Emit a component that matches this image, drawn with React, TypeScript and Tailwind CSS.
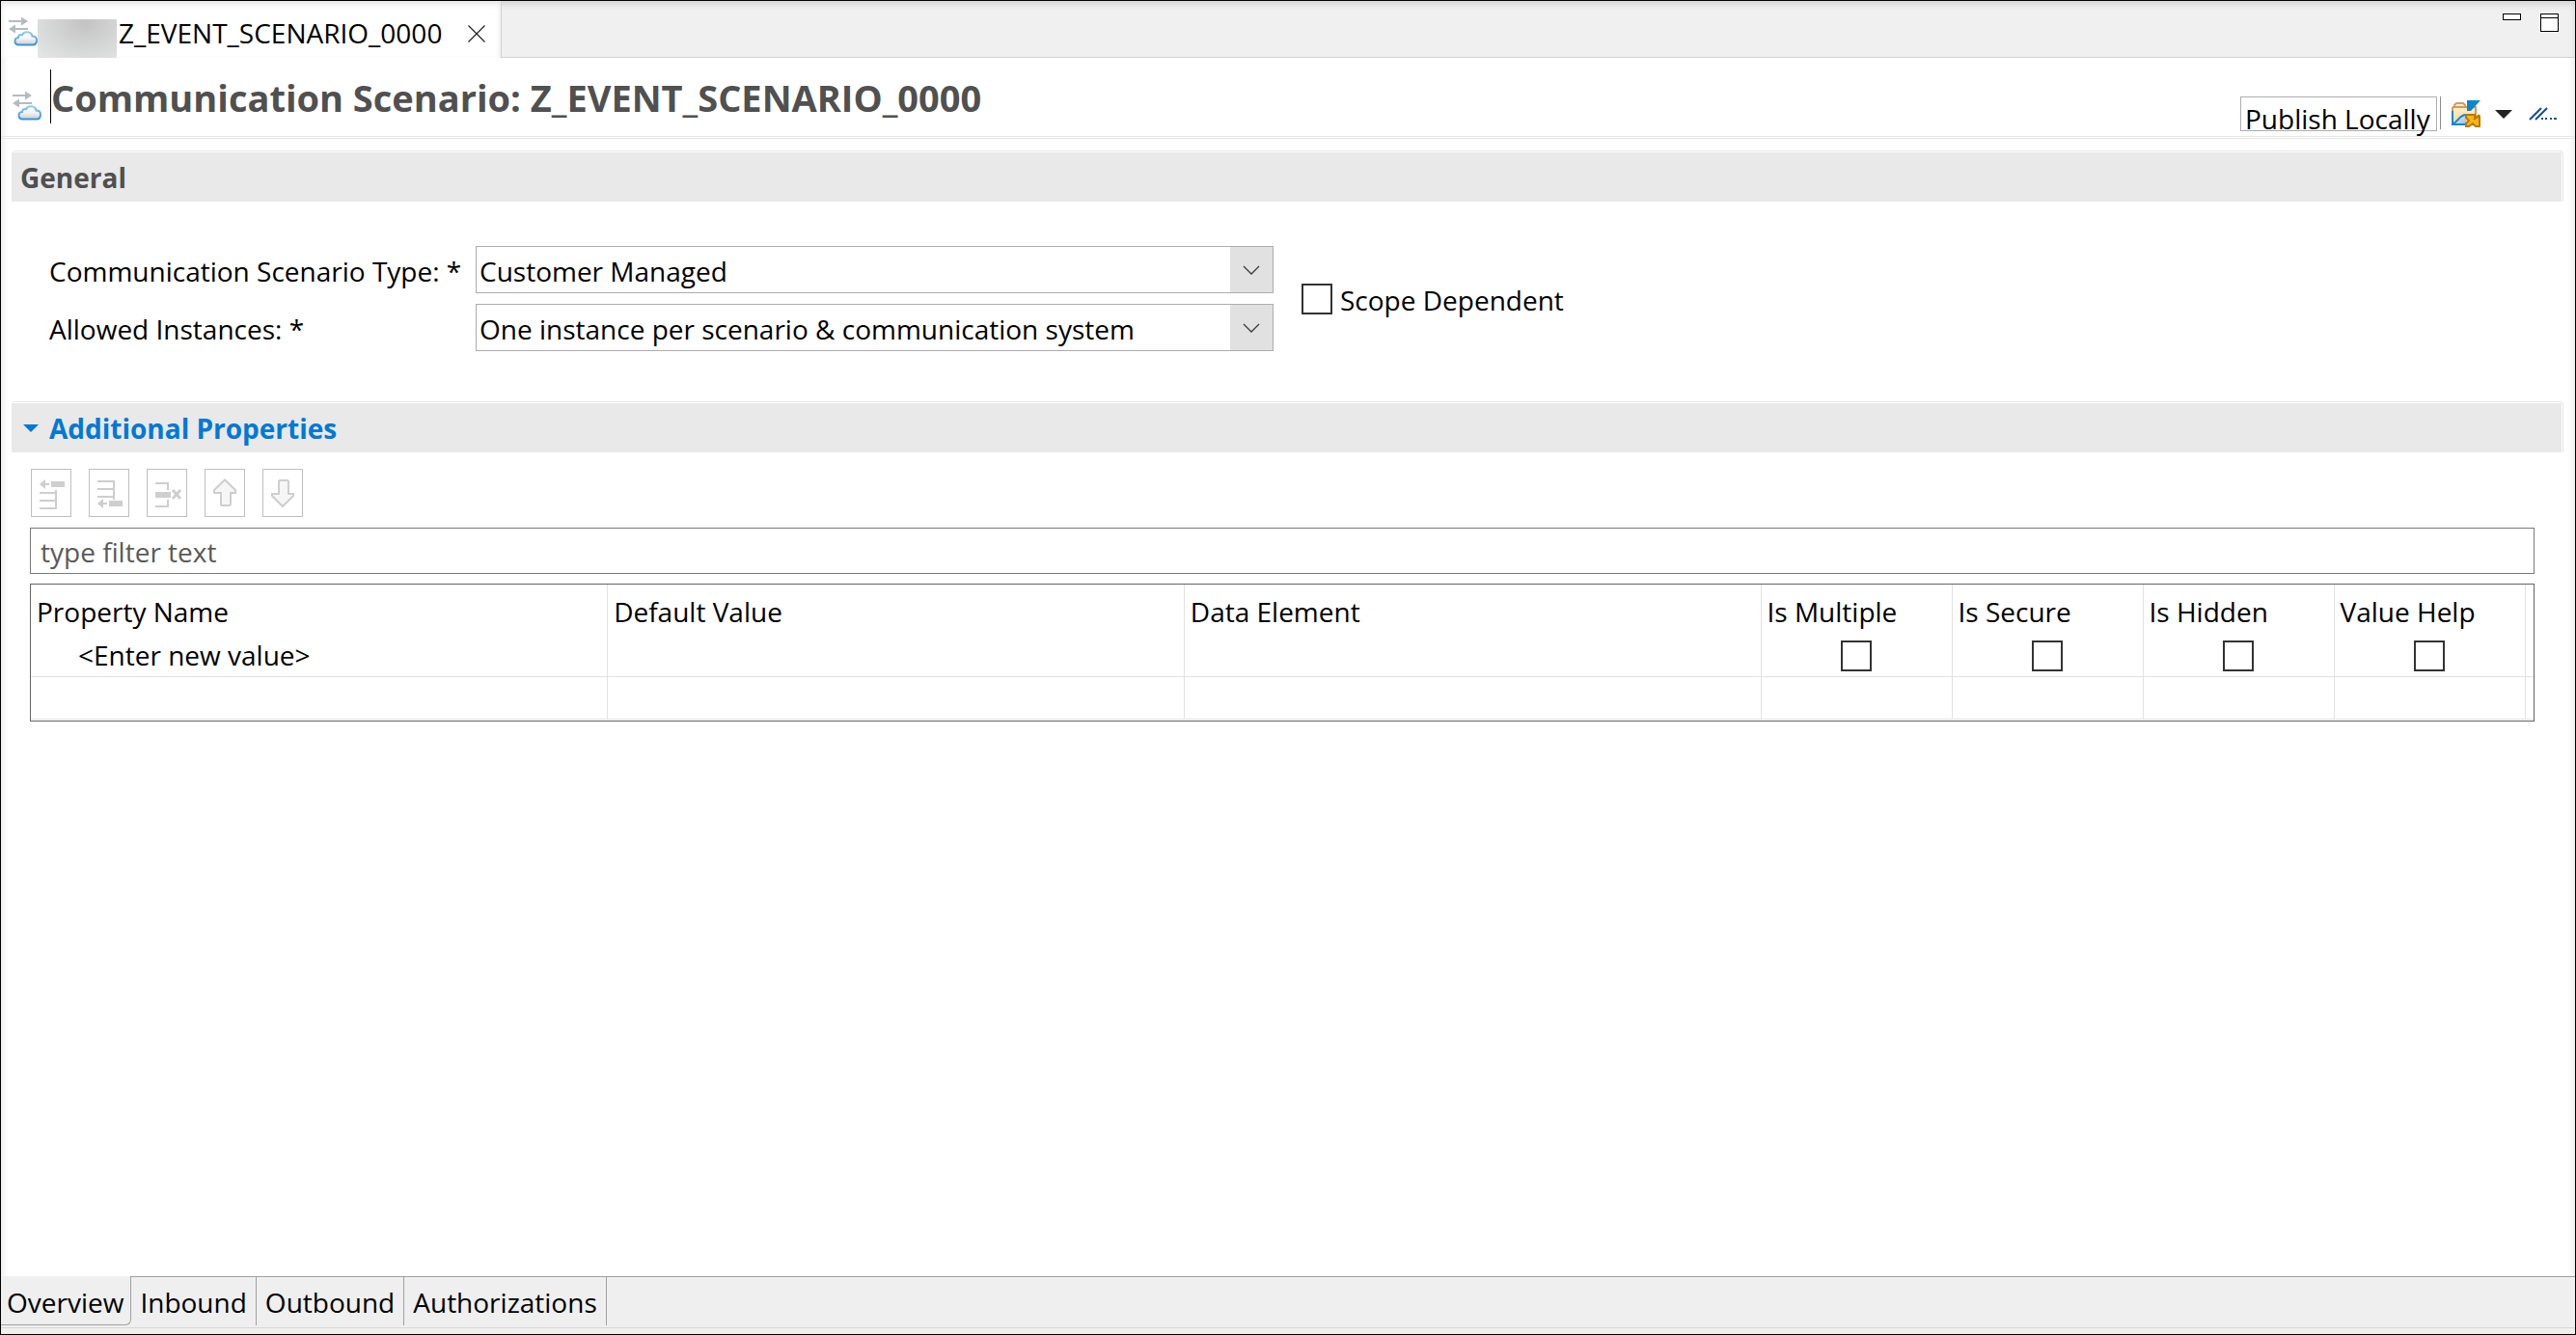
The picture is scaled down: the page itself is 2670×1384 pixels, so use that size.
import React, { ReactNode } from "react";

function ScenarioIcon({ id }: { id: string }) {
  return (
    <svg width="30" height="31" viewBox="0 0 30 31" fill="none" aria-hidden="true" className="shrink-0">
      <defs>
        <linearGradient id={id + "-fill"} x1="0" y1="0" x2="0" y2="1">
          <stop offset="0" stopColor="#ffffff" />
          <stop offset="0.5" stopColor="#f4f4f6" />
          <stop offset="1" stopColor="#c9cbd1" />
        </linearGradient>
        <linearGradient id={id + "-line"} x1="0" y1="0" x2="0" y2="1">
          <stop offset="0" stopColor="#8ccbef" />
          <stop offset="1" stopColor="#3b93cf" />
        </linearGradient>
      </defs>
      <path d="M0 4h13V0.500l7 4.500-7 4.500V6H0z" fill="#b5babd" />
      <path d="M20 12H7V8.500L0 13l7 4.500V14h13z" fill="#b5babd" />
      <path
        d="M10.500 29.500c-5 0-5.500-7-.5-7.500 0-2.500 2-3.300 4-2.800 1.500-4 9.500-4 10.500 1.200 3 0 4.500 2 4.500 4.300 0 3-1.500 4.800-4 4.800z"
        fill={"url(#" + id + "-fill)"}
        stroke={"url(#" + id + "-line)"}
        strokeWidth="2"
      />
    </svg>
  );
}

function FolderExportIcon() {
  return (
    <svg width="30" height="29" viewBox="0 0 30 29" fill="none" aria-hidden="true">
      <defs>
        <linearGradient id="folder-body" x1="0" y1="0" x2="0" y2="1">
          <stop offset="0" stopColor="#fdeecb" />
          <stop offset="1" stopColor="#f8d98e" />
        </linearGradient>
        <linearGradient id="folder-wave" x1="0" y1="0" x2="1" y2="1">
          <stop offset="0" stopColor="#e4eefb" />
          <stop offset="1" stopColor="#9cc3ee" />
        </linearGradient>
      </defs>
      <path d="M3 7V5l2-2h7l2 2v2" fill="#fdf3dc" stroke="#c9a06a" strokeWidth="2" />
      <path d="M1 8l1-1h23v18H1z" fill="url(#folder-body)" stroke="#cf9c55" strokeWidth="2" />
      <path d="M2 25c5-2 6-10 13-10v10z" fill="url(#folder-wave)" />
      <path d="M1 11v14h14M2 24c5-2 6-9 13-9" stroke="#1a86cf" strokeWidth="2" />
      <path d="M16 0h14L20 11h-4z" fill="#0a86d1" />
      <path d="M15 15h9v3l5-1v10h-4l-3-3-4 3h-3v-3l3-3-3-3z" fill="#fbb60e" stroke="#b87a0b" strokeWidth="2" />
      <path d="M23 20l6-5" stroke="#b87a0b" strokeWidth="2" />
    </svg>
  );
}

function LinesIcon() {
  return (
    <svg width="30" height="15" viewBox="0 0 30 15" fill="none" aria-hidden="true">
      <path d="M1 13L13 1M7 13L19 1" stroke="#1d5288" strokeWidth="2.200" />
      <path d="M13 11h2v2h-2zM17 11h2v2h-2zM22 11h2v2h-2zM26 11h3v2h-3z" fill="#1d5288" />
    </svg>
  );
}

const G = "#cecece";
const toolbar: { label: string; icon: ReactNode }[] = [
  {
    label: "Insert above",
    icon: (
      <>
        <path d="M8 15l6-5v4h4v2h-4v4zM20 12h14v6H20z" fill={G} />
        <path d="M8 24h17M8 32h17M8 40h17M25 21v20" stroke={G} strokeWidth="2" />
      </>
    ),
  },
  {
    label: "Insert below",
    icon: (
      <>
        <path d="M8 12h17M8 20h17M8 28h17M25 11v20" stroke={G} strokeWidth="2" />
        <path d="M8 35l6-5v4h4v2h-4v4zM20 32h14v6H20z" fill={G} />
      </>
    ),
  },
  {
    label: "Delete",
    icon: (
      <>
        <path d="M8 14h13v7M8 38h13v-7" stroke={G} strokeWidth="2" />
        <path d="M8 23h16v6H8z" fill={G} />
        <path d="M26 21l8 9M34 21l-8 9" stroke={G} strokeWidth="3" />
      </>
    ),
  },
  {
    label: "Move up",
    icon: <path d="M20 10.500L31 21v3h-5v12l-1 1h-8l-1-1V24H9v-3z" fill="#f6f6f6" stroke={G} strokeWidth="2" />,
  },
  {
    label: "Move down",
    icon: <path d="M20 38L31 27v-2h-5V12l-1-1h-8l-1 1v13H9v2z" fill="#f6f6f6" stroke={G} strokeWidth="2" />,
  },
];

function Combo({ id, label, value }: { id: string; label: string; value: string }) {
  return (
    <>
      <label htmlFor={id} className="pt-0.5">
        {label}
      </label>
      <div className="grid border border-[#adadad]">
        <select
          id={id}
          defaultValue={value}
          className="col-start-1 row-start-1 h-[47px] w-full appearance-none bg-white pt-0.5 pr-12 pl-[3px] outline-none"
        >
          <option>{value}</option>
        </select>
        <span className="pointer-events-none col-start-1 row-start-1 flex w-11 items-center justify-center justify-self-end bg-[#e1e1e1]">
          <svg width="18" height="10" viewBox="0 0 18 10" fill="none" aria-hidden="true">
            <path d="M1 1l8 8 8-8" stroke="#3c3c3c" strokeWidth="1.300" />
          </svg>
        </span>
      </div>
    </>
  );
}

const box = "block size-8 shrink-0 appearance-none border-2 border-[#333333] bg-white checked:bg-[#333333]";
const columns = ["Property Name", "Default Value", "Data Element", "Is Multiple", "Is Secure", "Is Hidden", "Value Help"];
const pages = ["Overview", "Inbound", "Outbound", "Authorizations"];

export default function App() {
  return (
    <div className="flex min-h-screen flex-col border border-black bg-white font-['Open_Sans',sans-serif] text-[28px] leading-[46px] text-black shadow-[inset_0_0_8px_#00000026]">
      <div className="flex h-[59px] justify-between border-b border-[#d2d2d2] bg-[#f0f0f0] shadow-[inset_0_4px_6px_#0000001c]">
        <div className="-mb-px flex items-center border-r border-[#d2d2d2] bg-white pr-4 pl-2 shadow-[inset_0_3px_6px_#0000001c]">
          <span className="pt-1">
            <ScenarioIcon id="tab" />
          </span>
          <span className="h-10 w-[82px] self-end bg-[#e4e5e5] bg-radial-[at_60%_10%] from-[#c3c3c3] to-[#e6e7e7]" />
          <span className="w-[346px] pt-1.5 pl-0.5">Z_EVENT_SCENARIO_0000</span>
          <button aria-label="Close" className="ml-[18px] flex pt-2">
            <svg width="18" height="18" viewBox="0 0 18 18" aria-hidden="true">
              <path d="M0.500 0.500l17 17M17.500 0.500l-17 17" stroke="#222" strokeWidth="1.200" />
            </svg>
          </button>
        </div>
        <div className="flex gap-5 pt-[13px] pr-[17px]">
          <button aria-label="Minimize" className="h-[7px] w-[19px] border border-black bg-white" />
          <button aria-label="Maximize" className="flex h-[19px] w-[19px] items-start border border-black bg-white">
            <span className="block h-1 grow border-b border-black" />
          </button>
        </div>
      </div>

      <header className="flex h-[84px] justify-between border-b border-[#e6e6e6]">
        <div className="mb-px flex grow justify-between border-b border-[#e6e6e6]">
          <div className="flex pt-3 pl-3">
            <span className="pt-[22px]">
              <ScenarioIcon id="title" />
            </span>
            <span className="ml-[9px] h-14 w-px bg-black" />
            <h1 className="text-[38px] leading-[58px] font-bold text-[#505050]">Communication Scenario: Z_EVENT_SCENARIO_0000</h1>
          </div>
          <div className="flex items-start pt-10 pr-[18px]">
            <button className="h-9 border border-[#adadad] bg-white px-1">
              <span className="block h-[34px] w-[194px] text-left leading-[44px]">Publish Locally</span>
            </button>
            <span className="ml-[3px] h-[34px] w-px bg-[#8c8c8c]" />
            <button aria-label="Export" className="ml-[11px] pt-1">
              <FolderExportIcon />
            </button>
            <button aria-label="More actions" className="ml-[15px] pt-3.5">
              <svg width="18" height="9" viewBox="0 0 18 9" aria-hidden="true">
                <path d="M0 0h18L9 9z" fill="#222" />
              </svg>
            </button>
            <button aria-label="Show details" className="ml-[17px] pt-[11px]">
              <LinesIcon />
            </button>
          </div>
        </div>
      </header>

      <main className="flex grow flex-col pt-3 pr-3 pl-[11px]">
        <section>
          <div className="rounded-t-sm border-t border-r border-[#e6e6e6] pt-px pr-px">
            <h2 className="h-[51px] bg-[#e9e9e9] pl-[9px] leading-[52px] font-bold text-[#505050]">General</h2>
          </div>
          <div className="flex items-center pt-[46px] pb-[52px] pl-[39px]">
            <div className="grid grid-cols-[442px_827px] items-center gap-y-[11px]">
              <Combo id="type" label="Communication Scenario Type: *" value="Customer Managed" />
              <Combo id="instances" label="Allowed Instances: *" value="One instance per scenario & communication system" />
            </div>
            <label className="ml-[29px] flex items-center gap-2">
              <input type="checkbox" className={box} />
              <span className="pt-0.5">Scope Dependent</span>
            </label>
          </div>
        </section>

        <section>
          <div className="rounded-t-sm border-t border-r border-[#e6e6e6] pt-px pr-px">
            <h2 className="h-[51px] bg-[#e9e9e9] pl-3 leading-[52px] font-bold text-[#0078d7]">
              <button aria-expanded="true" className="flex items-center gap-[11px]">
                <svg width="16" height="8" viewBox="0 0 16 8" aria-hidden="true">
                  <path d="M0 0h16L8 8z" fill="#0078d7" />
                </svg>
                Additional Properties
              </button>
            </h2>
          </div>
          <div className="flex flex-col pt-[17px] pr-[30px] pl-[19px]">
            <div className="flex gap-[18px] pl-px">
              {toolbar.map((t) => (
                <button key={t.label} aria-label={t.label} className="h-[50px] w-[42px] border border-[#bfbfbf]">
                  <svg width="40" height="48" viewBox="0 0 40 48" fill="none" aria-hidden="true">
                    {t.icon}
                  </svg>
                </button>
              ))}
            </div>
            <input
              type="text"
              aria-label="Filter"
              placeholder="type filter text"
              className="mt-[11px] h-12 border border-[#7a7a7a] px-2.5 pt-0.5 outline-none placeholder:text-[#5a5a5a] placeholder:opacity-100"
            />
            <div className="mt-2.5 border border-[#646464]">
              <table className="w-full table-fixed border-collapse text-left">
                <colgroup>
                  <col />
                  <col />
                  <col />
                  <col className="w-[198px]" />
                  <col className="w-[198px]" />
                  <col className="w-[198px]" />
                  <col className="w-[198px]" />
                  <col className="w-[9px]" />
                </colgroup>
                <thead>
                  <tr className="h-12">
                    {columns.map((c) => (
                      <th key={c} scope="col" className="border-r border-[#e2e2e2] p-0 pt-2 pl-1.5 leading-10 font-normal">
                        {c}
                      </th>
                    ))}
                    <td />
                  </tr>
                </thead>
                <tbody>
                  <tr className="h-[47px] border-b border-[#e2e2e2]">
                    <td className="border-r border-[#e2e2e2] p-0 pt-1 pl-[49px] leading-10">&lt;Enter new value&gt;</td>
                    <td className="border-r border-[#e2e2e2]" />
                    <td className="border-r border-[#e2e2e2]" />
                    {columns.slice(3).map((c) => (
                      <td key={c} className="border-r border-[#e2e2e2] p-0 pt-1.5">
                        <input type="checkbox" aria-label={c} className={box + " mx-auto"} />
                      </td>
                    ))}
                    <td />
                  </tr>
                  <tr className="h-11 border-b border-[#e2e2e2]">
                    {columns.map((c) => (
                      <td key={c} className="border-r border-[#e2e2e2]" />
                    ))}
                    <td />
                  </tr>
                </tbody>
              </table>
              <div className="h-px" />
            </div>
          </div>
        </section>
      </main>

      <footer className="border-b-6 border-[#efefef] bg-[#efefef]">
        <nav className="flex border-b border-[#d8d8d8] pb-0.5" aria-label="Editor pages">
          {pages.map((p, i) => (
            <button
              key={p}
              className={
                i === 0
                  ? "h-[51px] rounded-br-md border-r border-b border-[#a0a0a0] pt-1 pr-[7px] pl-1.5"
                  : "h-[51px] border-t border-r border-[#a0a0a0] pt-0.5 pr-[9px] pl-[9px]"
              }
            >
              {p}
            </button>
          ))}
          <span className="grow border-t border-[#a0a0a0]" />
        </nav>
      </footer>
    </div>
  );
}
